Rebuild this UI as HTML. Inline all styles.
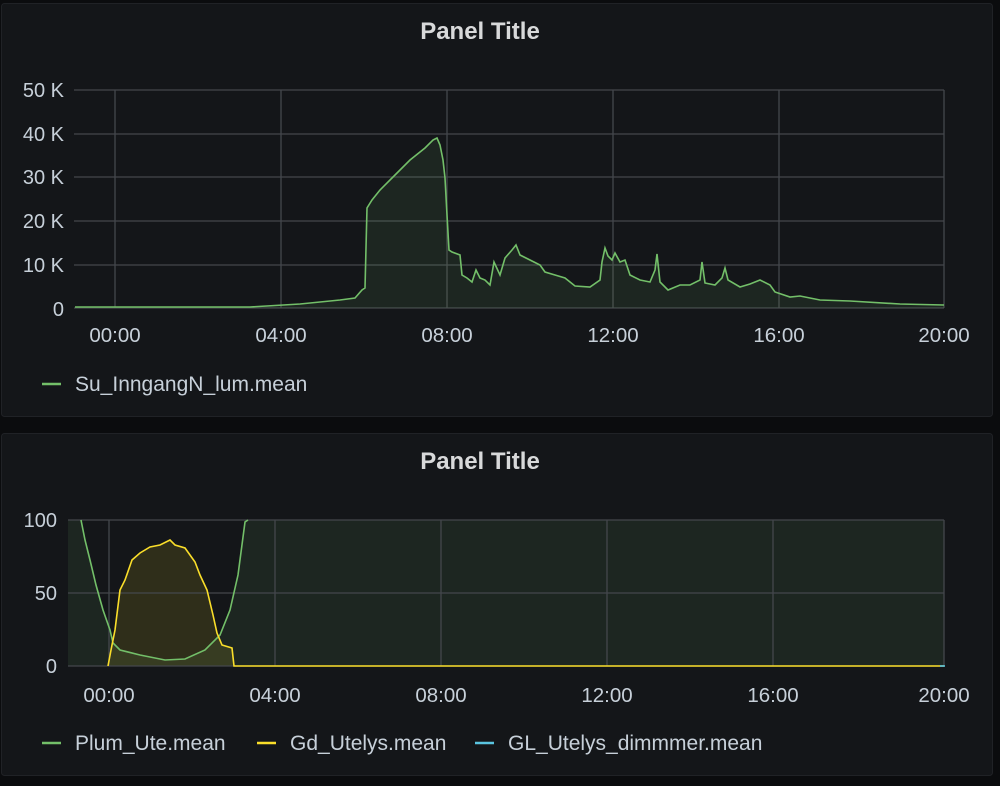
<!DOCTYPE html>
<html><head><meta charset="utf-8"><style>
html,body{margin:0;padding:0;background:#0b0c0e;}
svg{display:block}
text{font-family:"Liberation Sans",sans-serif;fill:#c7d0d9;}
</style></head><body>
<svg width="1000" height="786" viewBox="0 0 1000 786" xmlns="http://www.w3.org/2000/svg">
<rect x="0" y="0" width="1000" height="786" fill="#0b0c0e"/>
<rect x="1.5" y="3.5" width="991" height="413" rx="3" fill="#141619" stroke="#202226"/>
<rect x="1.5" y="433.5" width="991" height="342" rx="3" fill="#141619" stroke="#202226"/>
<text x="480" y="39" font-size="24" text-anchor="middle" font-weight="bold" style="fill:#d8d9da">Panel Title</text>
<text x="480" y="469" font-size="24" text-anchor="middle" font-weight="bold" style="fill:#d8d9da">Panel Title</text>
<g stroke="#44474c" stroke-width="1.3">
<line x1="74" y1="90" x2="944" y2="90"/><line x1="74" y1="134" x2="944" y2="134"/><line x1="74" y1="177" x2="944" y2="177"/><line x1="74" y1="221" x2="944" y2="221"/><line x1="74" y1="265" x2="944" y2="265"/><line x1="74" y1="308" x2="944" y2="308"/>
<line x1="115" y1="90" x2="115" y2="308"/><line x1="281" y1="90" x2="281" y2="308"/><line x1="447" y1="90" x2="447" y2="308"/><line x1="613" y1="90" x2="613" y2="308"/><line x1="779" y1="90" x2="779" y2="308"/><line x1="944" y1="90" x2="944" y2="308"/>
</g>
<g font-size="20" text-anchor="end">
<text x="64" y="97">50 K</text><text x="64" y="141">40 K</text><text x="64" y="184">30 K</text><text x="64" y="228">20 K</text><text x="64" y="272">10 K</text><text x="64" y="316">0</text>
</g>
<g font-size="20.5" text-anchor="middle">
<text x="115" y="342">00:00</text><text x="281" y="342">04:00</text><text x="447" y="342">08:00</text><text x="613" y="342">12:00</text><text x="779" y="342">16:00</text><text x="944" y="342">20:00</text>
</g>
<path d="M75,307 L250,307 300,304 340,300 355,298 362,290 365,288 367,208 372,200 380,190 395,175 410,160 425,148 433,140 437,138 440,145 443,160 445,178 447,215 449,250 452,252 460,255 462,275 467,278 472,282 476,270 480,278 485,280 490,285 494,262 500,275 505,258 512,250 516,245 520,255 530,260 540,265 545,272 555,275 565,278 575,286 590,287 600,280 602,262 605,248 608,256 612,260 615,253 620,262 625,260 630,275 640,280 650,282 655,270 657,254 660,282 668,290 680,285 690,285 700,280 702,262 705,283 715,285 722,278 725,268 728,280 740,287 750,284 760,280 770,285 775,292 790,297 800,296 820,300 850,301 900,304 944,305 L944,308 L75,308 Z" fill="#73bf69" fill-opacity="0.1" stroke="none"/>
<path d="M75,307 L250,307 300,304 340,300 355,298 362,290 365,288 367,208 372,200 380,190 395,175 410,160 425,148 433,140 437,138 440,145 443,160 445,178 447,215 449,250 452,252 460,255 462,275 467,278 472,282 476,270 480,278 485,280 490,285 494,262 500,275 505,258 512,250 516,245 520,255 530,260 540,265 545,272 555,275 565,278 575,286 590,287 600,280 602,262 605,248 608,256 612,260 615,253 620,262 625,260 630,275 640,280 650,282 655,270 657,254 660,282 668,290 680,285 690,285 700,280 702,262 705,283 715,285 722,278 725,268 728,280 740,287 750,284 760,280 770,285 775,292 790,297 800,296 820,300 850,301 900,304 944,305" fill="none" stroke="#73bf69" stroke-width="1.6"/>
<line x1="42" y1="384" x2="61" y2="384" stroke="#73bf69" stroke-width="2.5"/>
<text x="75" y="391" font-size="21">Su_InngangN_lum.mean</text>
<path d="M68,520 L81,520 85,540 90,560 96,585 103,610 110,630 113,643 120,650 140,655 165,660 185,659 205,650 220,635 230,610 238,575 245,522 248,520 L944,520 L944,666 L68,666 Z" fill="#73bf69" fill-opacity="0.1"/>
<path d="M108,666 L111,650 115,630 120,590 125,580 132,560 140,553 150,547 160,545 170,540 175,545 185,548 195,562 200,575 207,590 213,615 217,633 222,645 232,648 234,666 Z" fill="#fade2a" fill-opacity="0.12"/>
<g stroke="#44474c" stroke-width="1.3">
<line x1="68" y1="520" x2="944" y2="520"/><line x1="68" y1="593" x2="944" y2="593"/><line x1="68" y1="666" x2="944" y2="666"/>
<line x1="109" y1="520" x2="109" y2="666"/><line x1="275" y1="520" x2="275" y2="666"/><line x1="441" y1="520" x2="441" y2="666"/><line x1="607" y1="520" x2="607" y2="666"/><line x1="773" y1="520" x2="773" y2="666"/><line x1="944" y1="520" x2="944" y2="666"/>
</g>
<g font-size="20" text-anchor="end">
<text x="57" y="527">100</text><text x="57" y="600">50</text><text x="57" y="673">0</text>
</g>
<g font-size="20.5" text-anchor="middle">
<text x="109" y="702">00:00</text><text x="275" y="702">04:00</text><text x="441" y="702">08:00</text><text x="607" y="702">12:00</text><text x="773" y="702">16:00</text><text x="944" y="702">20:00</text>
</g>
<path d="M81,520 L85,540 90,560 96,585 103,610 110,630 113,643 120,650 140,655 165,660 185,659 205,650 220,635 230,610 238,575 245,522 248,520" fill="none" stroke="#73bf69" stroke-width="1.6"/>
<path d="M108,666 L111,650 115,630 120,590 125,580 132,560 140,553 150,547 160,545 170,540 175,545 185,548 195,562 200,575 207,590 213,615 217,633 222,645 232,648 234,666 L944,666" fill="none" stroke="#fade2a" stroke-width="1.6"/>
<line x1="940" y1="666" x2="945" y2="666" stroke="#5ac4e0" stroke-width="1.6"/>
<line x1="42" y1="743" x2="61" y2="743" stroke="#73bf69" stroke-width="2.5"/>
<text x="75" y="750" font-size="21">Plum_Ute.mean</text>
<line x1="257" y1="743" x2="276" y2="743" stroke="#fade2a" stroke-width="2.5"/>
<text x="290" y="750" font-size="21">Gd_Utelys.mean</text>
<line x1="475" y1="743" x2="494" y2="743" stroke="#5ac4e0" stroke-width="2.5"/>
<text x="508" y="750" font-size="21">GL_Utelys_dimmmer.mean</text>
</svg>
</body></html>
